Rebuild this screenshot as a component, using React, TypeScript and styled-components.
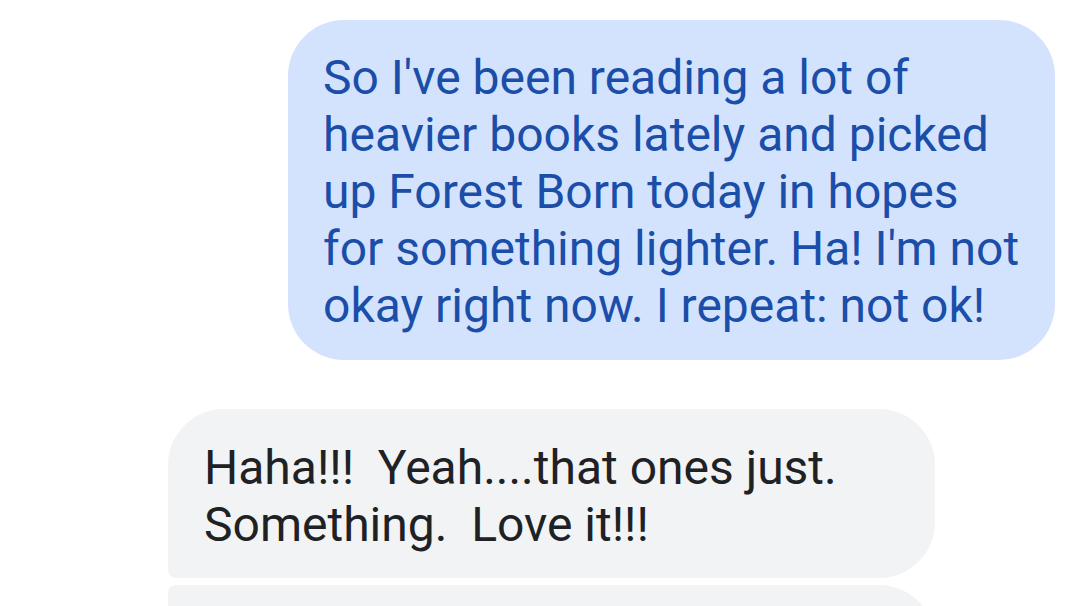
import React from 'react';
import styled, { createGlobalStyle } from 'styled-components';

const GlobalStyle = createGlobalStyle`
  html, body {
    margin: 0;
    padding: 0;
    background: #fff;
  }
  body {
    font-family: Roboto, 'Noto Sans', sans-serif;
    -webkit-font-smoothing: antialiased;
  }
`;

const Thread = styled.div`
  display: flex;
  flex-direction: column;
  width: 1078px;
  height: 606px;
  overflow: hidden;
  padding: 20px 23px 0 0;
  box-sizing: border-box;
`;

const Row = styled.div<{ $out?: boolean; $gap: number }>`
  display: flex;
  justify-content: ${(p) => (p.$out ? 'flex-end' : 'flex-start')};
  padding-left: ${(p) => (p.$out ? 0 : 168)}px;
  margin-top: ${(p) => p.$gap}px;
`;

const Bubble = styled.div<{ $out?: boolean; $radius: string; $min?: number }>`
  width: 767px;
  box-sizing: border-box;
  min-height: ${(p) => p.$min || 0}px;
  padding: ${(p) => (p.$out ? '29px 20px 26px 35px' : '30px 20px 25px 36px')};
  border-radius: ${(p) => p.$radius};
  background: ${(p) => (p.$out ? '#d3e3fd' : '#f1f3f4')};
  color: ${(p) => (p.$out ? '#1a4ea9' : '#202124')};
  font-size: 48px;
  line-height: 57px;
  white-space: pre;
  flex-shrink: 0;
`;

const messages = [
  {
    out: true,
    gap: 0,
    radius: '56px',
    text: "So I've been reading a lot of\nheavier books lately and picked\nup Forest Born today in hopes\nfor something lighter. Ha! I'm not\nokay right now. I repeat: not ok!"
  },
  {
    out: false,
    gap: 49,
    radius: '56px 56px 56px 8px',
    text: 'Haha!!!  Yeah....that ones just.\nSomething.  Love it!!!'
  },
  {
    out: false,
    gap: 7,
    radius: '8px 56px 56px 8px',
    text: '',
    min: 120
  }
];

const App = () => (
  <>
    <GlobalStyle />
    <Thread>
      {messages.map((m, i) => (
        <Row key={i} $out={m.out} $gap={m.gap}>
          <Bubble $out={m.out} $radius={m.radius} $min={m.min}>
            {m.text}
          </Bubble>
        </Row>
      ))}
    </Thread>
  </>
);

export default App;
